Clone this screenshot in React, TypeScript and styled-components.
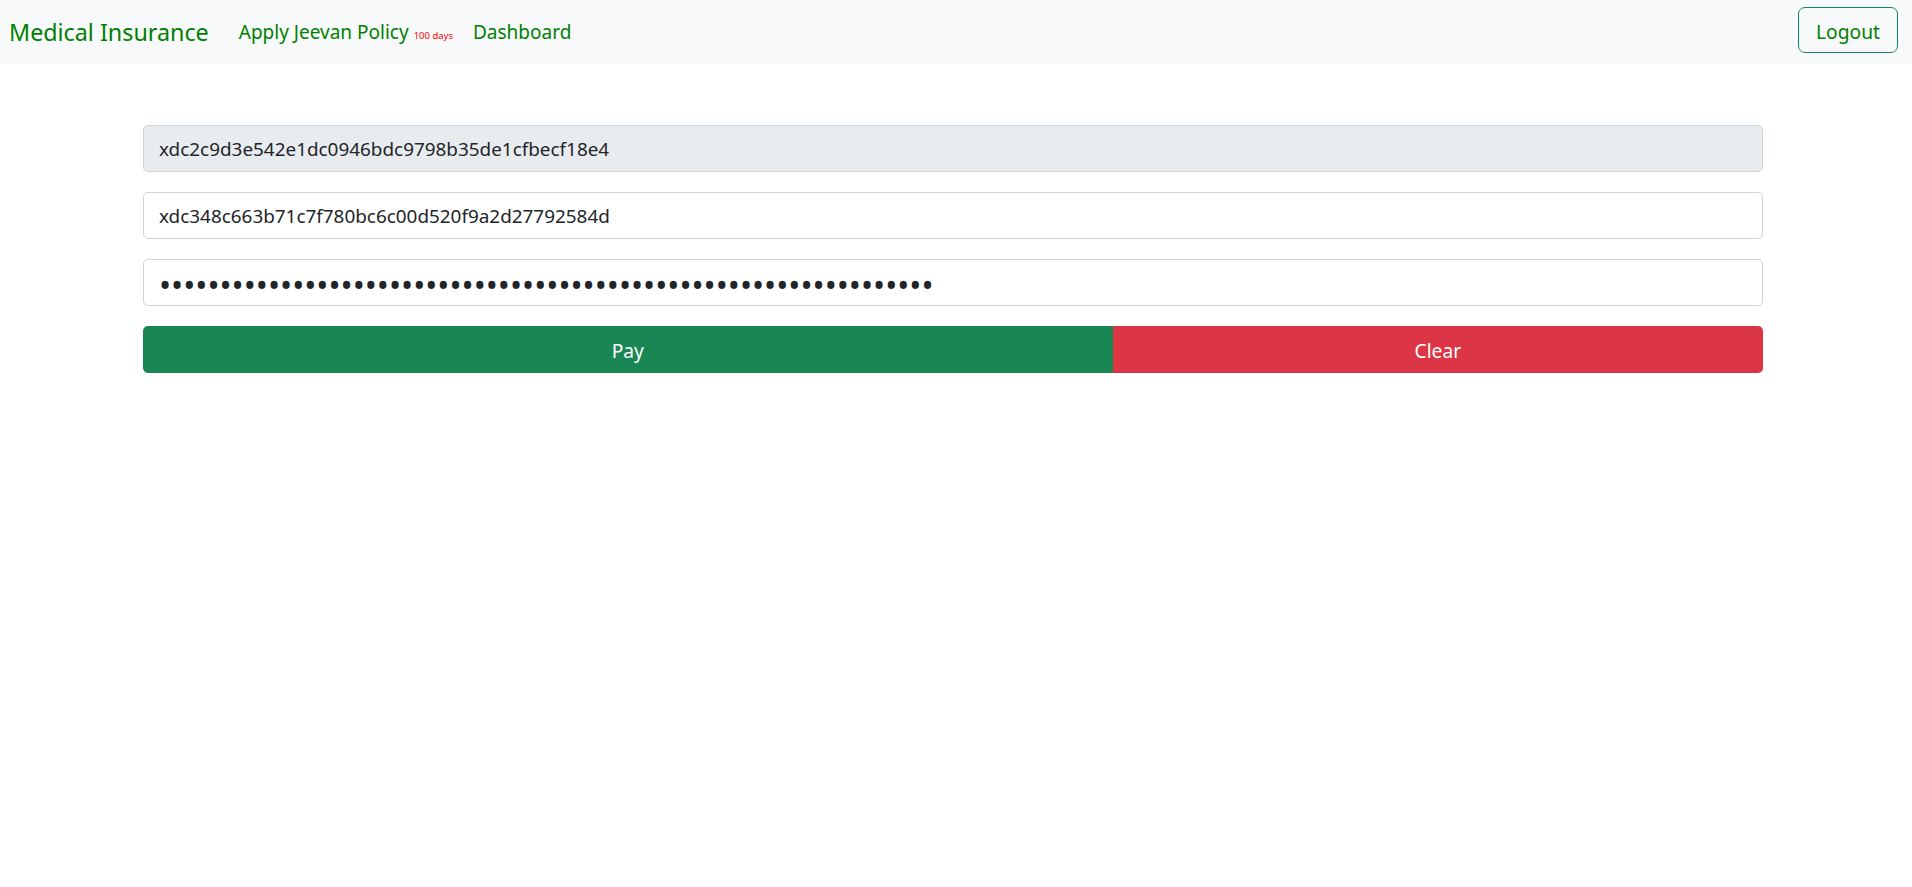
import React from "react";
import styled, { createGlobalStyle } from "styled-components";

const GlobalStyle = createGlobalStyle`
  * {
    box-sizing: border-box;
  }

  body {
    margin: 0;
    background: #ffffff;
    font-family: "Segoe UI", "Noto Sans", "Liberation Sans", sans-serif;
    color: #212529;
  }
`;

const NavBar = styled.nav`
  display: flex;
  align-items: center;
  height: 64px;
  padding: 0 14px 0 9px;
  background-color: #f8f9fa;
`;

const Brand = styled.a`
  font-size: 23.3px;
  line-height: 1.5;
  color: green;
  text-decoration: none;
  margin-right: 20px;
  white-space: nowrap;
`;

const NavList = styled.ul`
  display: flex;
  align-items: center;
  list-style: none;
  margin: 0;
  padding: 0;
`;

const NavLink = styled.a`
  display: block;
  padding: 9px 10px;
  font-size: 19px;
  line-height: 1.5;
  color: green;
  text-decoration: none;
  white-space: nowrap;
`;

const Badge = styled.span`
  font-size: 9.5px;
  color: red;
  margin-left: 5px;
`;

const LogoutButton = styled.button`
  margin-left: auto;
  margin-bottom: 4px;
  width: 100px;
  height: 46px;
  border: 1px solid #198754;
  border-radius: 7px;
  background: transparent;
  color: green;
  font-family: inherit;
  font-size: 19.2px;
  padding-top: 4px;
  cursor: pointer;
`;

const Form = styled.form`
  display: flex;
  flex-direction: column;
  gap: 20px;
  width: 1620px;
  margin: 61px 0 0 143px;
`;

const Field = styled.input<{ $secret?: boolean }>`
  display: block;
  width: 100%;
  height: 47px;
  padding: ${({ $secret }) => ($secret ? "4px 15px 0" : "0 15px")};
  border: 1px solid #ced4da;
  border-radius: 5px;
  background-color: ${({ disabled }) => (disabled ? "#e9ecef" : "#ffffff")};
  color: #212529;
  font-family: inherit;
  font-size: ${({ $secret }) => ($secret ? "32.2px" : "18.9px")};
  outline: none;
`;

const ButtonGroup = styled.div`
  display: flex;
  height: 47px;
`;

const GroupButton = styled.button<{ $tone: "pay" | "clear"; $grow: number }>`
  flex: ${({ $grow }) => $grow} 1 0;
  border: none;
  background-color: ${({ $tone }) => ($tone === "pay" ? "#198754" : "#dc3545")};
  color: #ffffff;
  font-family: inherit;
  font-size: 19.2px;
  padding-top: 2px;
  cursor: pointer;

  &:first-child {
    border-radius: 5px 0 0 5px;
  }

  &:last-child {
    border-radius: 0 5px 5px 0;
  }
`;

const privateKey =
  "3f6a9c2e81b74d05a6e3c9f1b2d8047e5a9c3b6f1d2e8a7c4b9f0e3d6a1c5b82";

const App = () => {
  return (
    <>
      <GlobalStyle />
      <NavBar>
        <Brand href="#">Medical Insurance</Brand>
        <NavList>
          <li>
            <NavLink href="#">
              Apply Jeevan Policy<Badge>100 days</Badge>
            </NavLink>
          </li>
          <li>
            <NavLink href="#">Dashboard</NavLink>
          </li>
        </NavList>
        <LogoutButton type="button">Logout</LogoutButton>
      </NavBar>
      <Form onSubmit={(e) => e.preventDefault()}>
        <Field
          type="text"
          disabled
          value="xdc2c9d3e542e1dc0946bdc9798b35de1cfbecf18e4"
          readOnly
        />
        <Field
          type="text"
          defaultValue="xdc348c663b71c7f780bc6c00d520f9a2d27792584d"
        />
        <Field type="password" $secret defaultValue={privateKey} />
        <ButtonGroup>
          <GroupButton type="submit" $tone="pay" $grow={6}>
            Pay
          </GroupButton>
          <GroupButton type="reset" $tone="clear" $grow={4}>
            Clear
          </GroupButton>
        </ButtonGroup>
      </Form>
    </>
  );
};

export default App;
